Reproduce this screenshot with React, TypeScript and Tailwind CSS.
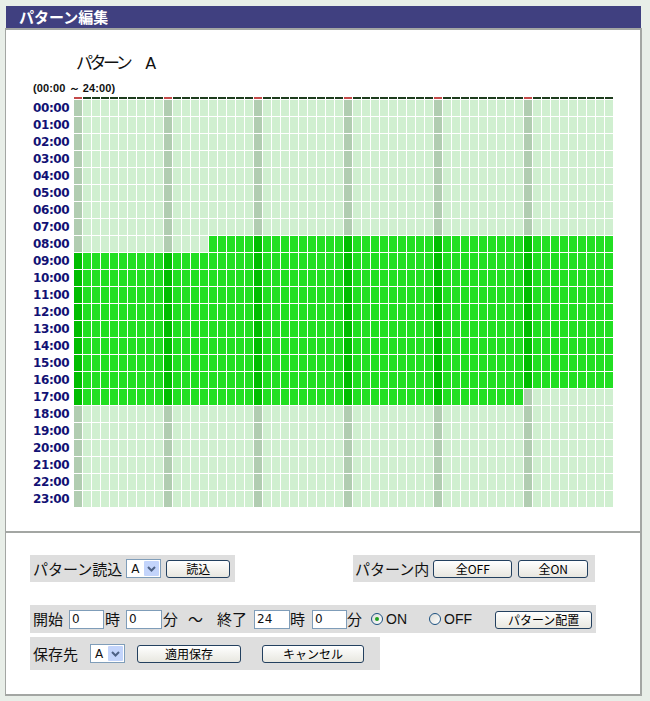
import React from "react";

const hours = Array.from({ length: 24 }, (_, i) => `${String(i).padStart(2, "0")}:00`);
const cols = Array.from({ length: 60 }, (_, i) => i);

function isOn(row: number, col: number) {
  if (row === 8) return col >= 15;
  if (row >= 9 && row <= 16) return true;
  if (row === 17) return col < 50;
  return false;
}

function cellClass(row: number, col: number) {
  const mark = col % 10 === 0;
  if (isOn(row, col)) return mark ? "bg-[#00bd00]" : "bg-[#22df22]";
  return mark ? "bg-[#b1cdb1]" : "bg-[#d0efd0]";
}

function Button({ label, w }: { label: string; w: string }) {
  return (
    <button
      className={`${w} h-[18px] rounded-[3px] border border-[#23405f] bg-gradient-to-b from-white to-[#e8e7e0] text-[12px] leading-[16px] text-black`}
    >
      {label}
    </button>
  );
}

function Select({ value, ml }: { value: string; ml: string }) {
  return (
    <div className={`${ml} w-[35px] h-[19px] border border-[#7f9db9] bg-white flex items-center justify-between pl-[4px] pr-[1px]`}>
      <span className="text-[12px] leading-[14px] font-['DejaVu_Sans',sans-serif]">{value}</span>
      <span className="w-[15px] h-[15px] bg-[#c3d4fb] flex items-center justify-center rounded-[1px]">
        <svg width="9" height="6" viewBox="0 0 9 6">
          <path d="M1 1 L4.5 4.5 L8 1" stroke="#4d6185" strokeWidth="2" fill="none" />
        </svg>
      </span>
    </div>
  );
}

function Input({ value, w, ml }: { value: string; w: string; ml: string }) {
  return (
    <div className={`${ml} ${w} h-[19px] border border-[#7f9db9] bg-white pl-[2px] text-[12px] leading-[17px] font-['DejaVu_Sans',sans-serif]`}>
      {value}
    </div>
  );
}

function Radio({ checked, ml }: { checked: boolean; ml: string }) {
  return (
    <span className={`${ml} w-[12px] h-[12px] rounded-full border border-[#1c5180] bg-gradient-to-br from-[#dcdcd7] to-white flex items-center justify-center`}>
      {checked && <span className="w-[4px] h-[4px] rounded-full bg-[#21a121]" />}
    </span>
  );
}

export default function App() {
  return (
    <div className="w-[650px] h-[701px] bg-[#e8eee8] pt-[5px] font-['Noto_Sans_CJK_JP',sans-serif] text-[#111]">
      <div className="ml-[5px] w-[637px]">
        <div className="ml-[1px] mt-[1px] w-[635px] h-[22px] bg-[#404080] pl-[13px] text-[15px] leading-[22px] font-bold text-white">
          パターン編集
        </div>

        <div className="h-[505px] bg-white border-t-2 border-b-2 border-l border-r-2 border-[#a3a6a3]">
          <div className="ml-[70px] mt-[22px] h-[20px] flex items-baseline text-[17px] leading-[20px]">
            <span className="tracking-[-3.5px]">パターン</span>
            <span className="ml-[16px] font-['DejaVu_Sans',sans-serif] text-[16px]">A</span>
          </div>
          <div className="ml-[27px] mt-[10px] h-[12px] text-[11px] leading-[12px] font-bold font-['Liberation_Sans',sans-serif] tracking-[0.1px]">
            (00:00 ～ 24:00)
          </div>
          <div className="ml-[68px] mt-[3px] flex gap-[1px]">
            {cols.map((c) => (
              <div key={c} className={`w-[8px] h-[2px] ${c % 10 === 0 ? "bg-[#c44a4a]" : "bg-[#1d3d1d]"}`} />
            ))}
          </div>
          <div className="ml-[27px] mt-[1px] flex gap-[5px]">
            <div className="w-[36px] flex flex-col gap-[1px]">
              {hours.map((h) => (
                <div key={h} className="h-[16px] text-right text-[12px] leading-[16px] font-bold text-[#121274] font-['DejaVu_Sans',sans-serif] tracking-[-0.4px]">
                  {h}
                </div>
              ))}
            </div>
            <div className="grid grid-cols-[repeat(60,8px)] auto-rows-[16px] gap-[1px]">
              {hours.map((h, r) => cols.map((c) => <div key={`${h}-${c}`} className={cellClass(r, c)} />))}
            </div>
          </div>
        </div>

        <div className="h-[163px] bg-white border-b-2 border-l border-r-2 border-[#a3a6a3] pl-[24px] pt-[22px] text-[15px]">
          <div className="flex">
            <div className="w-[205px] h-[27px] bg-[#dedede] flex items-center pl-[3px]">
              <span className="leading-[18px]">パターン読込</span>
              <Select value="A" ml="ml-[4px]" />
              <div className="ml-[5px]">
                <Button label="読込" w="w-[64px]" />
              </div>
            </div>
            <div className="ml-[118px] w-[242px] h-[27px] bg-[#dedede] flex items-center pl-[2px]">
              <span className="leading-[18px]">パターン内</span>
              <div className="ml-[4px]">
                <Button label="全OFF" w="w-[79px]" />
              </div>
              <div className="ml-[6px]">
                <Button label="全ON" w="w-[70px]" />
              </div>
            </div>
          </div>

          <div className="mt-[23px] w-[566px] h-[28px] bg-[#dedede] flex items-center pl-[3px]">
            <span className="leading-[18px]">開始</span>
            <Input value="0" w="w-[35px]" ml="ml-[6px]" />
            <span className="ml-[1px] leading-[18px]">時</span>
            <Input value="0" w="w-[36px]" ml="ml-[6px]" />
            <span className="ml-[1px] leading-[18px]">分</span>
            <span className="ml-[10px] leading-[18px]">～</span>
            <span className="ml-[14px] leading-[18px]">終了</span>
            <Input value="24" w="w-[36px]" ml="ml-[7px]" />
            <span className="leading-[18px]">時</span>
            <Input value="0" w="w-[35px]" ml="ml-[7px]" />
            <span className="leading-[18px]">分</span>
            <Radio checked ml="ml-[9px]" />
            <span className="ml-[3px] text-[14px] leading-[18px] font-['Liberation_Sans',sans-serif]">ON</span>
            <Radio checked={false} ml="ml-[22px]" />
            <span className="ml-[3px] text-[14px] leading-[18px] font-['Liberation_Sans',sans-serif]">OFF</span>
            <div className="ml-[23px]">
              <Button label="パターン配置" w="w-[97px]" />
            </div>
          </div>

          <div className="mt-[4px] w-[350px] h-[33px] bg-[#dedede] flex items-center pl-[3px]">
            <span className="leading-[18px]">保存先</span>
            <Select value="A" ml="ml-[12px]" />
            <div className="ml-[12px]">
              <Button label="適用保存" w="w-[104px]" />
            </div>
            <div className="ml-[21px]">
              <Button label="キャンセル" w="w-[102px]" />
            </div>
          </div>
        </div>
      </div>
    </div>
  );
}
